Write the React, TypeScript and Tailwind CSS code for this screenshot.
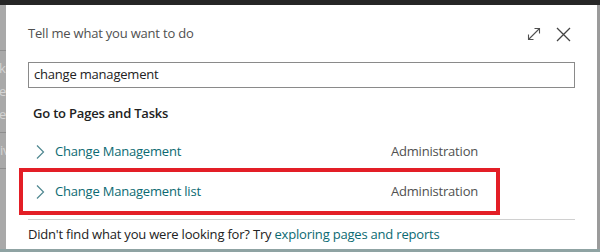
import React from 'react';

const font = { fontFamily: '"Segoe UI", "Open Sans", "Noto Sans", sans-serif' };

function Chevron() {
  return (
    <svg width="10" height="16" viewBox="0 0 10 16" className="shrink-0">
      <path d="M2 1.5 L8.5 8 L2 14.5" fill="none" stroke="#4f8790" strokeWidth="1.2" />
    </svg>
  );
}

function ResultRow({ name, area }: { name: string; area: string }) {
  return (
    <div className="flex items-center h-[38px]">
      <div className="w-[49px] pl-[29px] flex items-center">
        <Chevron />
      </div>
      <span className="text-[13px] text-[#0b6a72] w-[336px]">{name}</span>
      <span className="text-[13px] text-[#505050]">{area}</span>
    </div>
  );
}

export default function App() {
  return (
    <div className="w-[600px] h-[252px] bg-[#a7a9a9] flex flex-col overflow-hidden tracking-[-0.2px]" style={font}>
      <div className="h-[5px] bg-[#262626] shrink-0" />
      <div className="flex flex-1">
        {/* page behind the dialog */}
        <div className="w-[6px] shrink-0 bg-[#a9a9a9] text-[#d4d4d4] text-[13px] overflow-hidden">
          <div className="h-[46px] border-b border-[#8e8e8e]" />
          <div className="leading-[23px] -ml-[1px] pt-[6px]">
            <div>k</div>
            <div>e</div>
            <div>e</div>
          </div>
          <div className="border-t border-[#8e8e8e] mt-[6px] h-[36px] flex items-center">iv</div>
          <div className="border-t border-[#8e8e8e]" />
        </div>

        {/* dialog */}
        <div className="flex-1 bg-white flex flex-col h-[244px]">
          <div className="flex items-center justify-between pl-[22px] pr-[26px] pt-[6px] h-[52px]">
            <span className="text-[13px] text-[#505050]">Tell me what you want to do</span>
            <div className="flex items-center gap-[15px]">
              <svg width="14" height="14" viewBox="0 0 14 14">
                <g fill="none" stroke="#505050" strokeWidth="1.1">
                  <path d="M1.5 12.5 L12.5 1.5" />
                  <path d="M7.5 1.5 H12.5 V6.5" />
                  <path d="M1.5 7.5 V12.5 H6.5" />
                </g>
              </svg>
              <svg width="15" height="15" viewBox="0 0 15 15">
                <path d="M1 1 L14 14 M14 1 L1 14" fill="none" stroke="#444" strokeWidth="1.3" />
              </svg>
            </div>
          </div>

          <div className="px-[22px] pt-[5px]">
            <div className="h-[26px] border border-[#8a8a8a] flex items-center pl-[5px] text-[13px] text-[#222]">
              change management
            </div>
          </div>

          <div className="pl-[27px] pt-[7px] h-[45px] text-[13px] font-semibold text-[#222] flex items-center">
            Go to Pages and Tasks
          </div>

          <div>
            <ResultRow name="Change Management" area="Administration" />
            <div className="ml-[13px] w-[481px] h-[47px] border-[4px] border-[#e31e26] -mt-[3px] flex items-center">
              <div className="-ml-[17px] flex-1">
                <ResultRow name="Change Management list" area="Administration" />
              </div>
            </div>
          </div>

          <div className="mx-[22px] mt-[4px] border-t border-[#d0d0d0]" />
          <div className="pl-[22px] pt-[5px] text-[13px] text-[#222]">
            Didn't find what you were looking for? Try{' '}
            <span className="text-[#0b6a72]">exploring pages and reports</span>
          </div>
        </div>

        <div className="w-[3px] shrink-0 bg-[#9b9b9b]" />
      </div>
      <div className="h-[3px] shrink-0 bg-[#8fa3a3]" />
    </div>
  );
}
